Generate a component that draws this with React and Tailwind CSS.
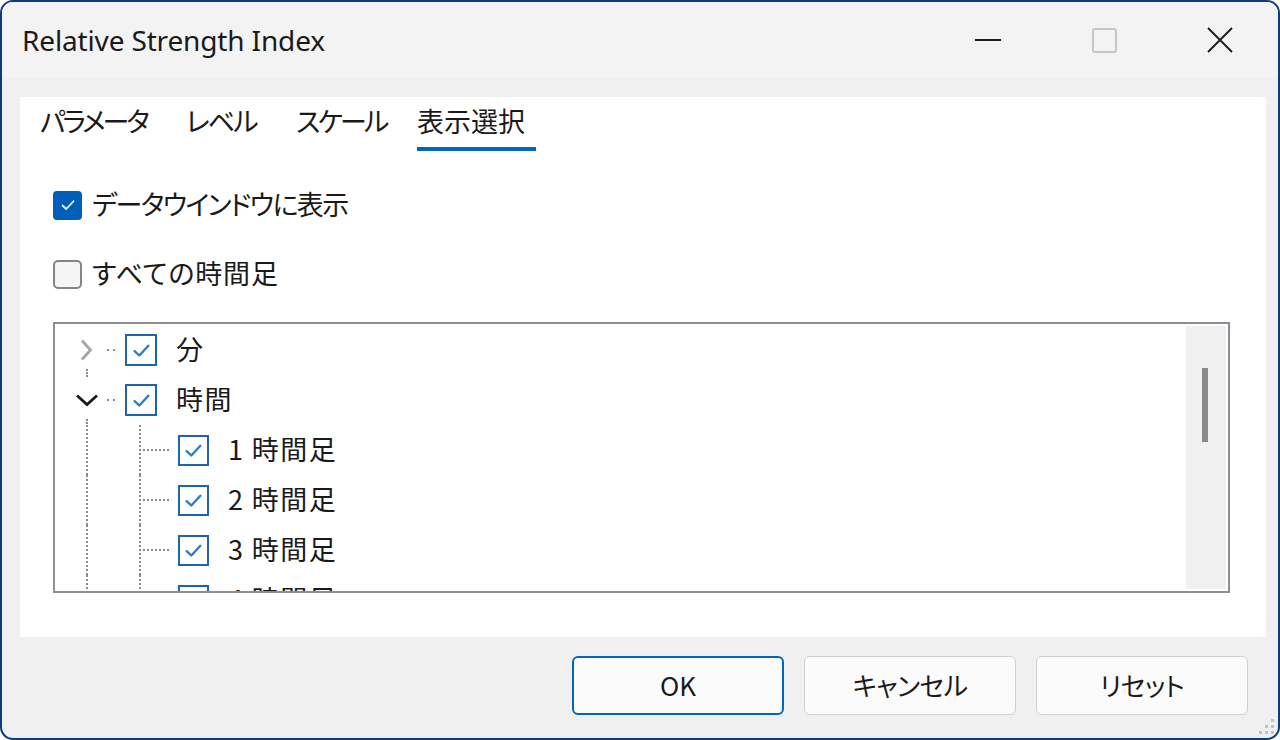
import React from 'react';

const JP = "font-['Noto_Sans_CJK_JP','Noto_Sans',sans-serif] [font-feature-settings:'palt']";

function Check({ className = '', width = 1.6 }) {
  return (
    <svg viewBox="0 0 16 16" className={className} fill="none">
      <polyline points="3.6,8.4 6.6,11.2 12.4,5" stroke="currentColor" strokeWidth={width} strokeLinecap="round" strokeLinejoin="round" />
    </svg>
  );
}

function TreeBox({ size = 'w-[31px] h-[31px]' }) {
  return (
    <div className={`${size} shrink-0 border-2 border-[#1d64ad] bg-white flex items-center justify-center text-[#2b7bcb]`}>
      <Check className="w-[25px] h-[25px]" width={1.5} />
    </div>
  );
}

function Chevron({ open }) {
  return open ? (
    <svg viewBox="0 0 24 24" className="w-[24px] h-[24px] shrink-0" fill="none">
      <polyline points="2,7.5 12,16.5 22,7.5" stroke="#1a1a1a" strokeWidth="2.8" />
    </svg>
  ) : (
    <svg viewBox="0 0 24 24" className="w-[24px] h-[24px] shrink-0" fill="none">
      <polyline points="7,2.5 15.5,12 7,21.5" stroke="#a6a6a6" strokeWidth="2.8" />
    </svg>
  );
}

function Dot() {
  return <div className="w-[2px] h-[2px] bg-[#8a8a8a]" />;
}

function ParentRow({ label, open }) {
  return (
    <div className="h-[50px] flex items-center shrink-0">
      <div className="w-[17px]" />
      <div className="w-[30px] h-full flex flex-col items-center">
        <div className="h-[13px]" />
        <Chevron open={open} />
        <div className="h-[13px] w-full flex justify-center pt-[7px] overflow-visible">
          <div className="w-[2px] h-[8px] shrink-0 border-l-2 border-dotted border-[#8a8a8a]" />
        </div>
      </div>
      <div className="w-[4px]" />
      <div className="w-[10px] flex gap-[4px] pl-[1px]">
        <Dot />
        <Dot />
      </div>
      <div className="w-[9px]" />
      <TreeBox size="w-[32px] h-[32px]" />
      <span className={`ml-[19px] -mt-[4px] text-[27px] tracking-[1.4px] leading-none text-[#1a1a1a] ${JP}`}>{label}</span>
    </div>
  );
}

function ChildRow({ label }) {
  return (
    <div className="h-[50px] flex items-center shrink-0">
      <div className="w-[17px]" />
      <div className="w-[30px] h-full flex justify-center">
        <div className="w-[2px] h-full border-l-2 border-dotted border-[#8a8a8a]" />
      </div>
      <div className="w-[37px]" />
      <div className="w-[2px] h-full border-l-2 border-dotted border-[#8a8a8a]" />
      <div className="w-[2px]" />
      <div className="w-[26px] border-t-2 border-dotted border-[#8a8a8a]" />
      <div className="w-[9px]" />
      <TreeBox />
      <span className={`ml-[19px] -mt-[4px] text-[27px] tracking-[1.4px] leading-none text-[#1a1a1a] ${JP}`}>{label}</span>
    </div>
  );
}

const TABS = [
  { label: 'パラメータ', w: 'w-[146px]', t: 'tracking-[-3px]' },
  { label: 'レベル', w: 'w-[110px]', t: 'tracking-[-2px]' },
  { label: 'スケール', w: 'w-[121px]', t: 'tracking-[-2.7px]' },
  { label: '表示選択', w: 'w-[119px]', t: 'tracking-[0px]', active: true },
];

export default function App() {
  return (
    <div className="w-[1280px] h-[740px] bg-white">
      <div className="relative w-full h-full flex flex-col rounded-[13px] border-2 border-[#0d3b7f] bg-[#f0f0f0] overflow-hidden">
        {/* title bar */}
        <div className="h-[76px] shrink-0 bg-[#f3f3f3] flex items-center">
          <span className="pl-[20px] flex-1 text-[28px] tracking-[-0.15px] text-[#1a1a1a] font-['Noto_Sans',sans-serif]">
            Relative Strength Index
          </span>
          <div className="w-[116px] h-full flex items-center justify-center">
            <div className="w-[26px] h-[2px] bg-[#1a1a1a]" />
          </div>
          <div className="w-[116px] h-full flex items-center justify-center">
            <div className="w-[25px] h-[25px] border-2 border-[#c6c6c6] rounded-[3px]" />
          </div>
          <div className="w-[116px] h-full flex items-center justify-center">
            <svg viewBox="0 0 26 26" className="w-[26px] h-[26px]" fill="none">
              <path d="M1 1 L25 25 M25 1 L1 25" stroke="#1a1a1a" strokeWidth="1.8" />
            </svg>
          </div>
        </div>

        {/* body */}
        <div className="flex-1 flex flex-col pt-[19px]">
          <div className="ml-[18px] mr-[12px] h-[540px] bg-white flex flex-col">
            {/* tabs */}
            <div className="h-[54px] flex pl-[20px] shrink-0">
              {TABS.map((tab) => (
                <div key={tab.label} className={`${tab.w} flex flex-col`}>
                  <div className={`h-[50px] pb-[4px] flex items-center text-[27px] leading-none text-[#1a1a1a] ${tab.t} ${JP}`}>{tab.label}</div>
                  {tab.active && <div className="h-[4px] w-[119px] bg-[#0067c0]" />}
                </div>
              ))}
            </div>

            <div className="mt-[39px] h-[30px] flex items-center pl-[33px]">
              <div className="w-[29px] h-[29px] rounded-[4px] bg-[#005fb8] flex items-center justify-center text-[#f4f8fc]">
                <Check className="w-[20px] h-[20px]" width={1.4} />
              </div>
              <span className={`ml-[10px] -mt-[4px] text-[27px] leading-none tracking-[-1.6px] text-[#1a1a1a] ${JP}`}>データウインドウに表示</span>
            </div>

            <div className="mt-[39px] h-[30px] flex items-center pl-[33px]">
              <div className="w-[29px] h-[29px] rounded-[5px] border-2 border-[#858585] bg-[#f5f5f5]" />
              <span className={`ml-[10px] -mt-[4px] text-[27px] leading-none tracking-[0.85px] text-[#1a1a1a] ${JP}`}>すべての時間足</span>
            </div>

            {/* tree */}
            <div className="mt-[33px] ml-[33px] w-[1177px] h-[271px] border-2 border-[#8b8f95] flex overflow-hidden">
              <div className="flex-1 flex flex-col pt-[1px] overflow-hidden">
                <ParentRow label="分" />
                <ParentRow label="時間" open />
                <ChildRow label="1 時間足" />
                <ChildRow label="2 時間足" />
                <ChildRow label="3 時間足" />
                <ChildRow label="4 時間足" />
              </div>
              <div className="w-[40px] my-[2px] mr-[2px] bg-[#f0f0f0] flex justify-center pt-[42px]">
                <div className="w-[6px] h-[74px] bg-[#8a8a8a] ml-[-2px]" />
              </div>
            </div>
          </div>

          {/* buttons */}
          <div className="flex justify-end gap-[20px] pt-[19px] pr-[30px]">
            <button className={`w-[212px] h-[59px] pb-[2px] rounded-[6px] border-2 border-[#0067c0] bg-[#fbfbfb] text-[26px] text-[#1a1a1a] ${JP}`}>OK</button>
            <button className={`w-[212px] h-[59px] pb-[2px] rounded-[6px] border border-[#d0d0d0] bg-[#fbfbfb] text-[26px] tracking-[-0.6px] text-[#1a1a1a] ${JP}`}>キャンセル</button>
            <button className={`w-[212px] h-[59px] pb-[2px] rounded-[6px] border border-[#d0d0d0] bg-[#fbfbfb] text-[26px] tracking-[-0.6px] text-[#1a1a1a] ${JP}`}>リセット</button>
          </div>
        </div>

        {/* resize grip */}
        <svg viewBox="0 0 18 18" className="absolute right-[3px] bottom-[3px] w-[18px] h-[18px]">
          <rect x="14" y="2" width="3" height="3" fill="#c3c3c3" />
          <rect x="8" y="8" width="3" height="3" fill="#c3c3c3" />
          <rect x="14" y="8" width="3" height="3" fill="#c3c3c3" />
          <rect x="2" y="14" width="3" height="3" fill="#c3c3c3" />
          <rect x="8" y="14" width="3" height="3" fill="#c3c3c3" />
          <rect x="14" y="14" width="3" height="3" fill="#c3c3c3" />
        </svg>
      </div>
    </div>
  );
}
